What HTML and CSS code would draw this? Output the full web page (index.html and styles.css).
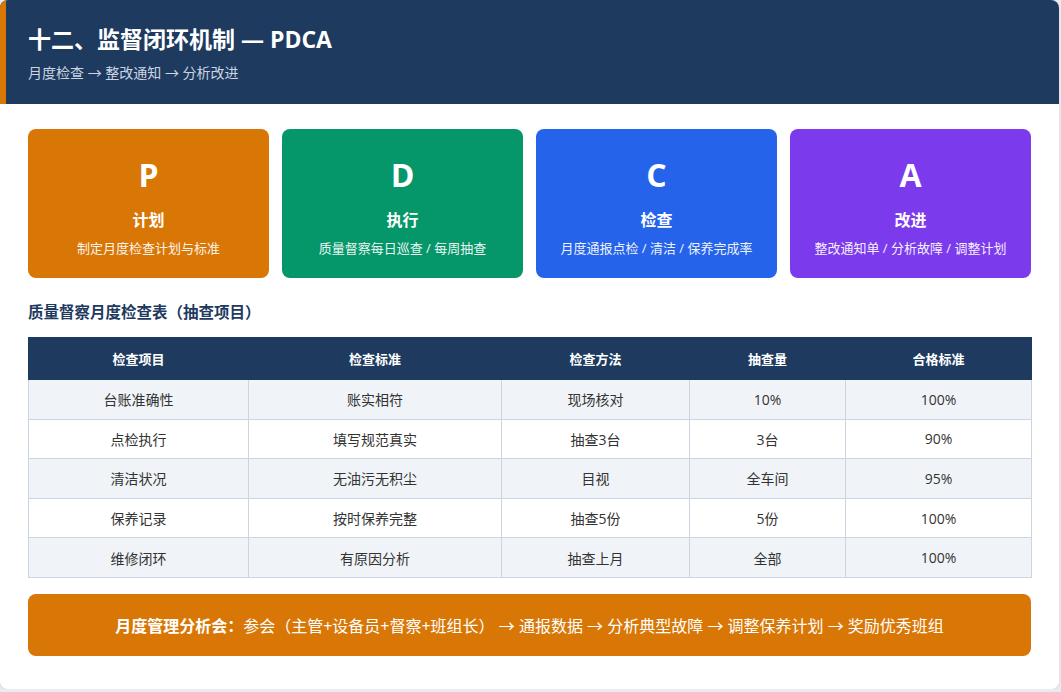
FILE: index.html
```html
<!DOCTYPE html>
<html lang="zh-CN">
<head>
<meta charset="utf-8">
<title>监督闭环机制 — PDCA</title>
<link rel="stylesheet" href="styles.css">
</head>
<body>
<div class="slide">
  <header class="head">
    <h1 class="title">十二、监督闭环机制 — PDCA</h1>
    <p class="sub">月度检查 → 整改通知 → 分析改进</p>
  </header>
  <main class="content">
    <div class="pdca">
      <div class="step step-p">
        <div class="letter">P</div>
        <div class="name">计划</div>
        <div class="desc">制定月度检查计划与标准</div>
      </div>
      <div class="step step-d">
        <div class="letter">D</div>
        <div class="name">执行</div>
        <div class="desc">质量督察每日巡查 / 每周抽查</div>
      </div>
      <div class="step step-c">
        <div class="letter">C</div>
        <div class="name">检查</div>
        <div class="desc">月度通报点检 / 清洁 / 保养完成率</div>
      </div>
      <div class="step step-a">
        <div class="letter">A</div>
        <div class="name">改进</div>
        <div class="desc">整改通知单 / 分析故障 / 调整计划</div>
      </div>
    </div>

    <h2 class="sec-title">质量督察月度检查表（抽查项目）</h2>

    <table class="tbl">
      <colgroup>
        <col class="c1"><col class="c2"><col class="c3"><col class="c4"><col class="c5">
      </colgroup>
      <thead>
        <tr><th>检查项目</th><th>检查标准</th><th>检查方法</th><th>抽查量</th><th>合格标准</th></tr>
      </thead>
      <tbody>
        <tr><td>台账准确性</td><td>账实相符</td><td>现场核对</td><td>10%</td><td>100%</td></tr>
        <tr><td>点检执行</td><td>填写规范真实</td><td>抽查3台</td><td>3台</td><td>90%</td></tr>
        <tr><td>清洁状况</td><td>无油污无积尘</td><td>目视</td><td>全车间</td><td>95%</td></tr>
        <tr><td>保养记录</td><td>按时保养完整</td><td>抽查5份</td><td>5份</td><td>100%</td></tr>
        <tr><td>维修闭环</td><td>有原因分析</td><td>抽查上月</td><td>全部</td><td>100%</td></tr>
      </tbody>
    </table>

    <div class="meeting">
      <strong>月度管理分析会：</strong>参会（主管+设备员+督察+班组长） → 通报数据 → 分析典型故障 → 调整保养计划 → 奖励优秀班组
    </div>
  </main>
</div>
</body>
</html>
```

FILE: styles.css
```css
* { box-sizing: border-box; }
html, body { margin: 0; padding: 0; }
body {
  background: #e9ebef;
  font-family: "Open Sans", "Noto Sans CJK SC", sans-serif;
  color: #333;
}
.slide {
  width: 1059px;
  height: 689px;
  background: #fff;
  border-radius: 8px;
  overflow: hidden;
  box-shadow: 0 1px 3px rgba(0,0,0,0.08);
}
.head {
  background: #1e3a5f;
  border-left: 6px solid #d97706;
  height: 104px;
  padding: 23px 22px 0;
}
.title {
  margin: 0;
  color: #fff;
  font-size: 23px;
  font-weight: 700;
  line-height: 32px;
}
.sub {
  margin: 8px 0 0;
  color: #cbd5e1;
  font-size: 14px;
  line-height: 19px;
}
.content {
  padding: 25px 28px 0;
}
.pdca {
  display: grid;
  grid-template-columns: repeat(4, 1fr);
  gap: 13px;
}
.step {
  height: 149px;
  border-radius: 8px;
  color: #fff;
  text-align: center;
  padding-top: 24px;
}
.step-p { background: #d97706; }
.step-d { background: #059669; }
.step-c { background: #2563eb; }
.step-a { background: #7c3aed; }
.letter {
  font-size: 32px;
  font-weight: 700;
  line-height: 44px;
}
.name {
  margin-top: 12px;
  font-size: 16px;
  font-weight: 700;
  line-height: 22px;
}
.desc {
  margin-top: 9px;
  font-size: 13px;
  line-height: 17px;
  opacity: 0.92;
}
.sec-title {
  margin: 23px 0 0;
  font-size: 15.5px;
  font-weight: 700;
  color: #1e3a5f;
  line-height: 22px;
}
.tbl {
  margin-top: 14px;
  width: 100%;
  border-collapse: collapse;
  table-layout: fixed;
  font-size: 14px;
}
.c1 { width: 220px; }
.c2 { width: 253px; }
.c3 { width: 188px; }
.c4 { width: 156px; }
.c5 { width: 186px; }
.tbl th {
  background: #1e3a5f;
  color: #fff;
  font-weight: 700;
  font-size: 13px;
  height: 42px;
  padding: 0;
  text-align: center;
  border: 1px solid #1e3a5f;
}
.tbl td {
  height: 39.6px;
  padding: 0;
  text-align: center;
  color: #333;
  border: 1px solid #cbd5e1;
}
.tbl tbody tr:nth-child(odd) td { background: #f0f4f8; }
.tbl tbody tr:nth-child(even) td { background: #fff; }
.meeting {
  margin-top: 16px;
  background: #d97706;
  color: #fff;
  border-radius: 8px;
  height: 62px;
  display: flex;
  align-items: center;
  justify-content: center;
  font-size: 16px;
}
.meeting strong { font-weight: 700; }
```
